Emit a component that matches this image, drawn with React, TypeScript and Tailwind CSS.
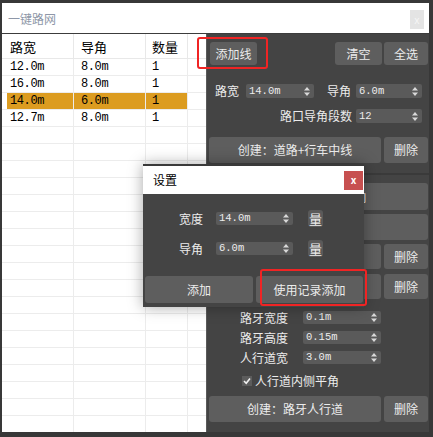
import React from "react";

const cjk = { fontFamily: '"Noto Sans CJK SC", "Noto Sans", sans-serif' };
const mono = { fontFamily: '"Liberation Mono", "DejaVu Sans Mono", monospace' };

function Arrows() {
  return (
    <svg width="6" height="9" viewBox="0 0 6 9" className="shrink-0">
      <path d="M3 0 L6 3.5 L0 3.5 Z" fill="#d8d8d8" />
      <path d="M3 9 L6 5.5 L0 5.5 Z" fill="#d8d8d8" />
    </svg>
  );
}

function Spin({ value, w, h = "h-[14px]" }: { value: string; w: string; h?: string }) {
  return (
    <div
      className={`${w} ${h} shrink-0 flex items-center justify-between bg-[#5a5a5a] rounded-[2px] pl-[3px] pr-[4px] text-[10.5px] text-[#ececec] leading-none`}
      style={mono}
    >
      <span>{value}</span>
      <Arrows />
    </div>
  );
}

function Btn({ label, className = "" }: { label: string; className?: string }) {
  return (
    <div
      className={`flex items-center justify-center bg-[#5e5e5e] rounded-[3px] text-[12px] text-[#ececec] leading-none ${className}`}
      style={cjk}
    >
      {label}
    </div>
  );
}

const rows = [
  ["12.0m", "8.0m", "1"],
  ["16.0m", "8.0m", "1"],
  ["14.0m", "6.0m", "1"],
  ["12.7m", "8.0m", "1"],
];

function Table() {
  const blanks = Array.from({ length: 19 });
  return (
    <div className="w-[204px] h-full bg-white overflow-hidden">
      <div className="flex h-[25px] border-b border-[#e8e8e8] text-[13px] text-black leading-none" style={cjk}>
        <div className="w-[72px] pl-[8px] flex items-center border-r border-[#e8e8e8]">路宽</div>
        <div className="w-[72px] pl-[7px] flex items-center border-r border-[#e8e8e8]">导角</div>
        <div className="w-[42px] pl-[6px] flex items-center border-r border-[#e8e8e8]">数量</div>
        <div className="flex-1" />
      </div>
      {rows.map((r, i) => {
        const sel = i === 2;
        const cell = sel ? "bg-[#dc9c20]" : "";
        return (
          <div key={i} className="flex h-[17px] border-b border-[#ececec] text-[12px] text-black leading-none tracking-[-0.4px]" style={mono}>
            <div className="w-[72px] border-r border-[#ececec] flex">
              <div className={`ml-[5px] flex-1 flex items-center pl-[3px] ${cell}`}>{r[0]}</div>
            </div>
            <div className={`w-[72px] border-r border-[#ececec] flex items-center pl-[7px] ${cell}`}>{r[1]}</div>
            <div className={`w-[42px] border-r border-[#ececec] flex items-center pl-[6px] ${cell}`}>{r[2]}</div>
            <div className="flex-1" />
          </div>
        );
      })}
      {blanks.map((_, i) => (
        <div key={i} className="flex h-[17px] border-b border-[#ececec]">
          <div className="w-[72px] border-r border-[#ececec]" />
          <div className="w-[72px] border-r border-[#ececec]" />
          <div className="w-[42px] border-r border-[#ececec]" />
          <div className="flex-1" />
        </div>
      ))}
    </div>
  );
}

function Panel() {
  return (
    <div className="flex-1 h-full bg-[#444444] flex flex-col text-[12px] text-[#ececec] leading-none" style={cjk}>
      <div className="mt-[8px] flex h-[23px] pl-[3px] pr-[1px]">
        <Btn label="添加线" className="w-[47px]" />
        <div className="flex-1" />
        <Btn label="清空" className="w-[47px]" />
        <Btn label="全选" className="w-[44px] ml-[2px]" />
      </div>

      <div className="mt-[19px] flex items-center h-[14px] pl-[8px]">
        <span className="w-[31px]">路宽</span>
        <Spin value="14.0m" w="w-[68px]" />
        <span className="w-[42px] text-right pr-[5px]">导角</span>
        <Spin value="6.0m" w="w-[66px]" />
      </div>

      <div className="mt-[11px] flex items-center justify-end h-[14px] pr-[7px]">
        <span className="mr-[4px]">路口导角段数</span>
        <Spin value="12" w="w-[66px]" />
      </div>

      <div className="mt-[14px] flex h-[26px] pl-[2px] pr-[1px] gap-[3px]">
        <Btn label="创建：道路+行车中线" className="flex-1" />
        <Btn label="删除" className="w-[44px]" />
      </div>

      <div className="mt-[10px] h-[2px] bg-[#3a3a3a]" />

      {/* lower group: the dialog sits over most of these buttons */}
      <div className="mt-[8px] flex flex-col gap-[4px] pl-[2px] pr-[1px]">
        <Btn label="创建：行车道方向" className="h-[27px]" />
        <Btn label="" className="h-[26px]" />
        <div className="flex h-[25px] gap-[3px]">
          <Btn label="" className="flex-1" />
          <Btn label="删除" className="w-[44px]" />
        </div>
        <div className="flex h-[25px] gap-[3px] mt-[1px]">
          <Btn label="" className="flex-1" />
          <Btn label="删除" className="w-[44px]" />
        </div>
      </div>

      <div className="mt-[12px] flex flex-col gap-[7px] pl-[33px]">
        {[
          ["路牙宽度", "0.1m"],
          ["路牙高度", "0.15m"],
          ["人行道宽", "3.0m"],
        ].map(([l, v]) => (
          <div key={l} className="flex items-center h-[13px]">
            <span className="w-[63px]">{l}</span>
            <Spin value={v} w="w-[78px]" h="h-[13px]" />
          </div>
        ))}
      </div>

      <div className="mt-[11px] flex items-center pl-[35px] h-[12px]">
        <div className="w-[10px] h-[10px] bg-[#5c5c5c] flex items-center justify-center">
          <svg width="8" height="8" viewBox="0 0 8 8">
            <path d="M1 4 L3.2 6.2 L7 1.5" stroke="#f0f0f0" strokeWidth="1.6" fill="none" />
          </svg>
        </div>
        <span className="ml-[3px]">人行道内侧平角</span>
      </div>

      <div className="mt-[9px] flex h-[26px] pl-[2px] pr-[1px] gap-[3px]">
        <Btn label="创建：路牙人行道" className="flex-1" />
        <Btn label="删除" className="w-[44px]" />
      </div>
    </div>
  );
}

function Dialog() {
  return (
    <div className="absolute left-[143px] top-[164px] w-[221px] h-[143px] bg-[#444444] border-t-[2px] border-[#3a3a3a] shadow-[0_0_14px_rgba(0,0,0,0.35)] flex flex-col">
      <div className="h-[28px] bg-white flex items-center justify-between pl-[10px] pr-[1px]">
        <span className="text-[12px] text-black leading-none" style={cjk}>设置</span>
        <div className="w-[19px] h-[19px] bg-[#c75050] flex items-center justify-center text-white text-[10px] font-bold leading-none" style={cjk}>
          x
        </div>
      </div>
      <div className="flex flex-col text-[12px] text-[#ececec] leading-none" style={cjk}>
        {[
          ["宽度", "14.0m", "mt-[16px]"],
          ["导角", "6.0m", "mt-[13px]"],
        ].map(([l, v, m]) => (
          <div key={l} className={`flex items-center h-[17px] ${m}`}>
            <span className="ml-[36px] w-[37px]">{l}</span>
            <Spin value={v} w="w-[77px]" h="h-[13px]" />
            <div className="ml-[15px] w-[15px] h-[17px] bg-[#5a5a5a] rounded-[3px] flex items-center justify-center text-[13px]">量</div>
          </div>
        ))}
        <div className="mt-[19px] flex h-[27px] pl-[2px] gap-[3px] pr-[1px]">
          <Btn label="添加" className="flex-1" />
          <Btn label="使用记录添加" className="w-[107px]" />
        </div>
      </div>
    </div>
  );
}

export default function App() {
  return (
    <div className="relative w-[433px] h-[437px] overflow-hidden bg-[#383838]">
      <div className="absolute inset-0 pt-[3px] pl-[2px] pr-[4px] pb-[5px] flex flex-col">
        <div className="h-[30px] bg-white flex items-start justify-between pl-[6px] pr-[5px]">
          <span className="mt-[10px] text-[12px] text-[#8e97a8] leading-none" style={cjk}>一键路网</span>
          <div className="mt-[7px] w-[14px] h-[19px] bg-[#e4e4e4] flex items-center justify-center text-[10px] text-[#f6f6f6] leading-none">x</div>
        </div>
        <div className="h-[1px] bg-[#3c3c3c]" />
        <div className="flex-1 flex min-h-0">
          <Table />
          <div className="w-[1px] bg-[#5a5a5a]" />
          <Panel />
        </div>
      </div>

      <Dialog />

      {/* annotation outlines */}
      <div className="absolute left-[197px] top-[37px] w-[71px] h-[32px] border-[2px] border-[#f02424] rounded-[3px]" />
      <div className="absolute left-[260px] top-[269px] w-[107px] h-[37px] border-[2px] border-[#f02424] rounded-[3px]" />
    </div>
  );
}
